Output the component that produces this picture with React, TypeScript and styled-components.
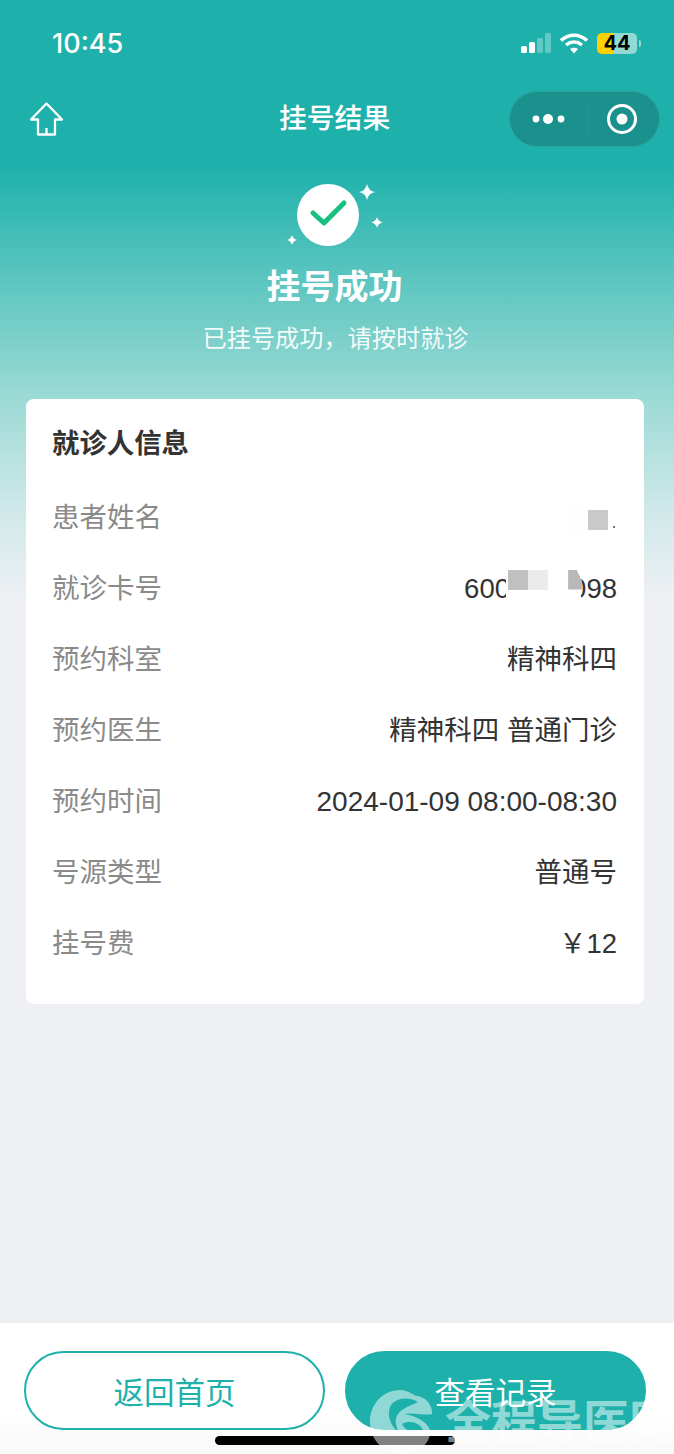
import React from "react";
import styled, { createGlobalStyle } from "styled-components";

const Global = createGlobalStyle`
  html, body { margin: 0; padding: 0; background: #eef0f4; }
  body { font-family: "Liberation Sans", "Noto Sans CJK SC", sans-serif; }
  * { box-sizing: border-box; }
`;

const Page = styled.div`
  position: relative;
  width: 674px;
  height: 1454px;
  overflow: hidden;
  display: flex;
  flex-direction: column;
  background: #eef0f4;
  font-family: "Liberation Sans", "Noto Sans CJK SC", sans-serif;
`;

const Head = styled.div`
  height: 610px;
  margin-bottom: -610px;
  background: linear-gradient(180deg, #1eb1ab 0, #1eb1ab 165px, #9cdad5 398px, #d3e9ea 520px, #eef0f4 600px);
  display: flex;
  flex-direction: column;
`;

const StatusBar = styled.div`
  height: 88px;
  display: flex;
  align-items: center;
  justify-content: space-between;
  padding: 0 37px 2px 52px;
  color: #fff;
`;
const Clock = styled.span`
  font-family: Inter, "Liberation Sans", sans-serif;
  font-size: 27px;
  font-weight: 500;
`;
const StatusIcons = styled.div`
  display: flex;
  align-items: center;
  gap: 9px;
`;
const Battery = styled.div`
  position: relative;
  width: 40px;
  height: 21px;
  border-radius: 5px;
  background: linear-gradient(90deg, #ffd100 0, #ffd100 41%, #93d9d3 41%, #93d9d3 100%);
  color: #000;
  font-family: Inter, "Liberation Sans", sans-serif;
  font-size: 20px;
  font-weight: 700;
  display: flex;
  align-items: center;
  justify-content: center;
  &::after {
    content: "";
    position: absolute;
    right: -4px;
    top: 7px;
    width: 2px;
    height: 7px;
    border-radius: 0 2px 2px 0;
    background: #93d9d3;
  }
`;

const NavBar = styled.div`
  height: 56px;
  margin-top: 3px;
  display: grid;
  grid-template-columns: 36px 1fr 151px;
  align-items: center;
  padding: 0 14px 0 28px;
  color: #fff;
`;
const NavTitle = styled.div`
  margin-left: 215px;
  font-size: 27.8px;
  font-weight: 500;
  line-height: 36px;
  white-space: nowrap;
`;
const Capsule = styled.div`
  width: 151px;
  height: 56px;
  border-radius: 28px;
  background: #1a918c;
  border: 1px solid #2ba39d;
  display: flex;
  align-items: center;
`;
const CapsuleHalf = styled.div<{ $w?: number }>`
  flex: ${(p) => (p.$w ? `0 0 ${p.$w}px` : "1")};
  height: 100%;
  padding-right: ${(p) => (p.$w ? 0 : 3)}px;
  display: flex;
  align-items: center;
  justify-content: center;
`;
const CapsuleLine = styled.div`
  width: 1px;
  height: 36px;
  background: #1d9a94;
`;

const Hero = styled.div`
  display: flex;
  flex-direction: column;
  align-items: center;
  margin-top: 37px;
  padding-right: 2px;
  color: #fff;
`;
const HeroTitle = styled.div`
  margin: 14px 3px 0 0;
  font-size: 34px;
  line-height: 46px;
  font-weight: 700;
`;
const HeroSub = styled.div`
  margin: 12px 1px 0 0;
  font-size: 24.2px;
  line-height: 34px;
  color: rgba(255, 255, 255, 0.92);
`;

const Card = styled.div`
  position: relative;
  margin: 399px 30px 0 26px;
  height: 605px;
  background: #fff;
  border-radius: 8px;
  padding: 24px 27px 0 26px;
`;
const CardTitle = styled.div`
  font-size: 27.4px;
  line-height: 42px;
  font-weight: 700;
  color: #333;
  margin-bottom: 14px;
`;
const Row = styled.div`
  display: flex;
  justify-content: space-between;
  align-items: center;
  height: 71px;
  font-size: 27.5px;
`;
const Label = styled.span`
  color: #8a8a8a;
`;
const Value = styled.span<{ $size?: number; $drop?: boolean }>`
  position: relative;
  color: #333;
  white-space: nowrap;
  font-size: ${(p) => p.$size ?? 27.5}px;
  padding-top: ${(p) => (p.$drop ? 6 : 0)}px;
`;
const NameMosaic = styled.div`
  position: absolute;
  right: 9px;
  top: 50%;
  margin-top: -5px;
  display: flex;
`;
const Speck = styled.div`
  position: absolute;
  right: 2px;
  top: 50%;
  margin-top: 11px;
  width: 2px;
  height: 2px;
  border-radius: 50%;
  background: #444;
`;
const CardCover = styled.div`
  position: absolute;
  left: 42px;
  top: -6px;
  bottom: -6px;
  width: 75px;
  padding: 9px 0 0 2px;
  background: #fff;
  display: flex;
  align-items: flex-start;
`;
const Tile = styled.div<{ $c: string; $w?: number; $cut?: boolean }>`
  flex: none;
  width: ${(p) => p.$w ?? 20}px;
  height: 20px;
  background: ${(p) => p.$c};
  ${(p) => (p.$cut ? "clip-path: polygon(0 0, 60% 0, 100% 60%, 100% 100%, 0 100%);" : "")}
`;

const Spacer = styled.div`
  flex: 1;
`;

const Footer = styled.div`
  position: relative;
  height: 131px;
  background: linear-gradient(180deg, #fff 0, #fff 90px, #f8f8f8 131px);
  display: flex;
  gap: 20px;
  padding: 28px 28px 0 24px;
`;
const Btn = styled.div<{ $solid?: boolean }>`
  flex: 1;
  height: 79px;
  border-radius: 40px;
  border: 2px solid #1eb1ab;
  background: ${(p) => (p.$solid ? "#1eb1ab" : "#fff")};
  color: ${(p) => (p.$solid ? "#fff" : "#1eb1ab")};
  font-size: 30.5px;
  display: flex;
  align-items: center;
  justify-content: center;
`;
const HomeBar = styled.div`
  position: absolute;
  left: 215px;
  bottom: 9px;
  width: 240px;
  height: 9px;
  border-radius: 5px;
  background: #000;
`;
const Watermark = styled.div`
  position: absolute;
  left: 370px;
  top: 1390px;
  display: flex;
  align-items: flex-start;
  gap: 11px;
  color: rgba(255, 255, 255, 0.5);
  font-size: 46px;
  font-weight: 700;
  line-height: 64px;
  white-space: nowrap;
`;

const Mark = () => (
  <svg width="64" height="64" viewBox="0 0 64 64">
    <path
      fillRule="evenodd"
      d="M62 24C63 14 54 6 46 6 40 2 34 0 30 0 13 0 0 14 0 32 0 50 14 64 32 64 48 64 60 54 60 42 60 34 48 26 34 24 44 22 54 26 62 24ZM48 12C38 6 24 8 20 17 17 25 20 36 30 44 24 34 24 26 32 20 38 16 44 14 48 12ZM32 34C40 30 50 32 54 42 46 44 36 42 32 34Z"
      fill="rgba(255,255,255,0.5)"
    />
  </svg>
);

export default function App() {
  return (
    <Page>
      <Global />
      <Head>
        <StatusBar>
          <Clock>10:45</Clock>
          <StatusIcons>
            <svg width="30" height="20" viewBox="0 0 30 20">
              <rect x="0" y="13" width="6" height="7" rx="1.5" fill="#fff" />
              <rect x="8" y="9" width="6" height="11" rx="1.5" fill="#fff" />
              <rect x="16" y="5" width="6" height="15" rx="1.5" fill="#fff" opacity="0.3" />
              <rect x="24" y="0" width="6" height="20" rx="1.5" fill="#fff" opacity="0.3" />
            </svg>
            <svg width="28" height="21" viewBox="0 0 28 21" fill="none" stroke="#fff" strokeWidth="3.4">
              <path d="M1 7.500C8.500 .5 19.500 .5 27 7.500" />
              <path d="M6 12C11 8 17 8 22 12" />
              <path d="M14 20.500l-4-4.400c2.400-1.700 5.600-1.700 8 0z" fill="#fff" stroke="none" />
            </svg>
            <Battery>44</Battery>
          </StatusIcons>
        </StatusBar>
        <NavBar>
          <svg width="36" height="36" viewBox="0 0 36 36" fill="none" stroke="#fff" strokeWidth="2.300" strokeLinejoin="round">
            <path d="M18.500 2.500L3 18.500h7V33.500h17V18.500h7z" />
            <path d="M18.500 33.500V27" />
          </svg>
          <NavTitle>挂号结果</NavTitle>
          <Capsule>
            <CapsuleHalf $w={77}>
              <svg width="34" height="14" viewBox="0 0 34 14" fill="#fff">
                <circle cx="4" cy="7" r="3.400" />
                <circle cx="16" cy="7" r="5" />
                <circle cx="29" cy="7" r="3.400" />
              </svg>
            </CapsuleHalf>
            <CapsuleLine />
            <CapsuleHalf>
              <svg width="32" height="32" viewBox="0 0 32 32">
                <circle cx="16" cy="16" r="13.500" fill="none" stroke="#fff" strokeWidth="3" />
                <circle cx="16" cy="16" r="5.500" fill="#fff" />
              </svg>
            </CapsuleHalf>
          </Capsule>
        </NavBar>
        <Hero>
          <svg width="100" height="66" viewBox="0 0 100 66">
            <circle cx="42" cy="31" r="31" fill="#fff" />
            <path d="M27 29l11 10 20-20" fill="none" stroke="#16c07f" strokeWidth="5" strokeLinecap="round" strokeLinejoin="round" />
            <path d="M81 0q1.500 7 8 8-6.500 1-8 8-1.500-7-8-8 6.500-1 8-8z" fill="#fff" />
            <path d="M91 33q1 4 5.500 5.500-4.500 1-5.500 5.500-1-4.500-5.500-5.500 4.500-1.500 5.500-5.500z" fill="#fff" />
            <path d="M6 51q1 4 5 5-4 1-5 5-1-4-5-5 4-1 5-5z" fill="#fff" />
          </svg>
          <HeroTitle>挂号成功</HeroTitle>
          <HeroSub>已挂号成功，请按时就诊</HeroSub>
        </Hero>
      </Head>
      <Card>
        <CardTitle>就诊人信息</CardTitle>
        <Row>
          <Label>患者姓名</Label>
          <Value>
            <NameMosaic>
              <Tile $c="#fdfdfd" />
              <Tile $c="#c9c9c9" />
            </NameMosaic>
            <Speck />
            &nbsp;
          </Value>
        </Row>
        <Row>
          <Label>就诊卡号</Label>
          <Value $drop>
            600&nbsp;&nbsp;&nbsp;&nbsp;&nbsp;&nbsp;&nbsp;&nbsp;098
            <CardCover>
              <Tile $c="#c0c0c0" />
              <Tile $c="#ebebeb" />
              <Tile $c="#fff" />
              <Tile $c="#b8b8b8" $w={14} $cut />
            </CardCover>
          </Value>
        </Row>
        <Row>
          <Label>预约科室</Label>
          <Value>精神科四</Value>
        </Row>
        <Row>
          <Label>预约医生</Label>
          <Value>精神科四 普通门诊</Value>
        </Row>
        <Row>
          <Label>预约时间</Label>
          <Value $size={28} $drop>2024-01-09 08:00-08:30</Value>
        </Row>
        <Row>
          <Label>号源类型</Label>
          <Value>普通号</Value>
        </Row>
        <Row>
          <Label>挂号费</Label>
          <Value>￥12</Value>
        </Row>
      </Card>
      <Spacer />
      <Footer>
        <Btn>返回首页</Btn>
        <Btn $solid>查看记录</Btn>
        <HomeBar />
      </Footer>
      <Watermark>
        <Mark />
        <span>全程导医网</span>
      </Watermark>
    </Page>
  );
}
